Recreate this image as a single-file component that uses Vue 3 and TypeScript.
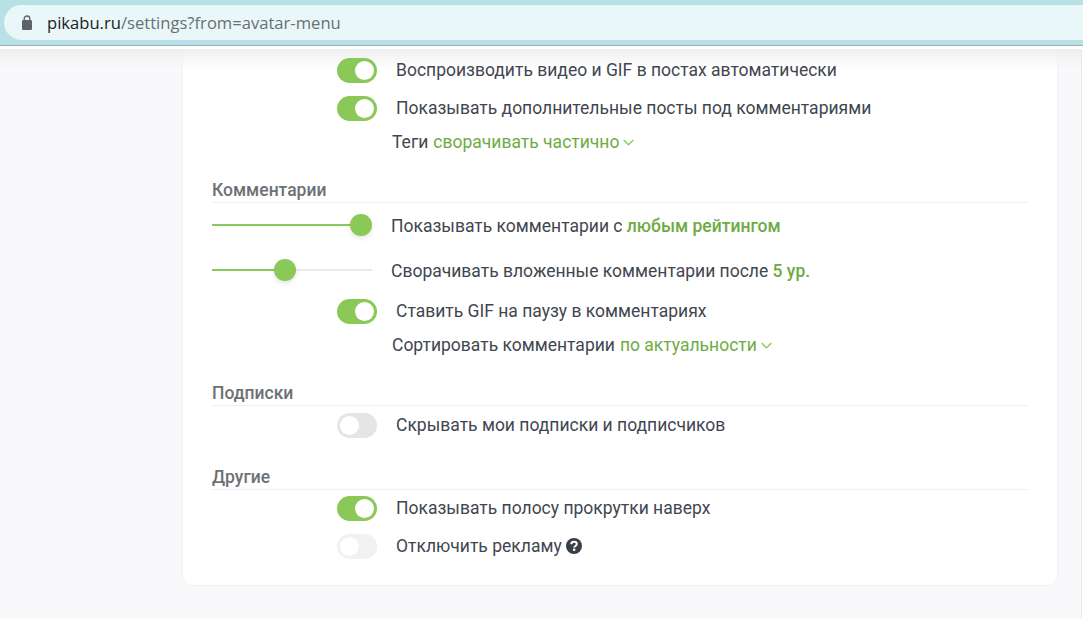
<script setup lang="ts">
interface Row { kind: 'toggle' | 'select' | 'slider'; text: string; on?: boolean; faded?: boolean; value?: string; fill?: number; help?: boolean; bold?: string }
interface Section { title?: string; rows: Row[] }

const sections: Section[] = [
  { rows: [
    { kind: 'toggle', text: 'Воспроизводить видео и GIF в постах автоматически', on: true },
    { kind: 'toggle', text: 'Показывать дополнительные посты под комментариями', on: true },
    { kind: 'select', text: 'Теги', value: 'сворачивать частично' },
  ] },
  { title: 'Комментарии', rows: [
    { kind: 'slider', text: 'Показывать комментарии с ', bold: 'любым рейтингом', fill: 100 },
    { kind: 'slider', text: 'Сворачивать вложенные комментарии после ', bold: '5 ур.', fill: 45 },
    { kind: 'toggle', text: 'Ставить GIF на паузу в комментариях', on: true },
    { kind: 'select', text: 'Сортировать комментарии', value: 'по актуальности' },
  ] },
  { title: 'Подписки', rows: [
    { kind: 'toggle', text: 'Скрывать мои подписки и подписчиков', on: false },
  ] },
  { title: 'Другие', rows: [
    { kind: 'toggle', text: 'Показывать полосу прокрутки наверх', on: true },
    { kind: 'toggle', text: 'Отключить рекламу', on: false, faded: true, help: true },
  ] },
]

// The thumb stays inside the 160px track, so its centre travels over 138px.
function thumbLeft(fill = 0): string {
  return 11 + fill * 1.38 + 'px'
}
</script>

<template>
  <div class="window">
    <header class="browser-bar">
      <div class="omnibox">
        <svg class="lock" width="12" height="15" viewBox="0 0 12 15">
          <rect x="1" y="5" width="10" height="10" rx="1.2" fill="#5f6368" />
          <path d="M3.2 5.5V3.8a2.8 2.8 0 0 1 5.6 0v1.7" fill="none" stroke="#5f6368" stroke-width="1.3" />
        </svg>
        <span class="url"><span class="host">pikabu.ru</span>/settings?from=avatar-menu</span>
      </div>
    </header>
    <div class="gap"></div>
    <main class="page">
      <div class="top-shade"></div>
      <section class="card">
        <div v-for="(section, i) in sections" :key="i" class="section">
          <h3 v-if="section.title" class="heading">{{ section.title }}</h3>
          <template v-for="row in section.rows" :key="row.text">
            <div v-if="row.kind === 'toggle'" class="row toggle-row">
              <span class="toggle" :class="{ on: row.on, faded: row.faded }"><span class="knob"></span></span>
              <span class="label">{{ row.text }}</span>
              <svg v-if="row.help" class="help" width="16" height="16" viewBox="0 0 16 16">
                <circle cx="8" cy="8" r="8" fill="#3a3f47" />
                <path d="M5.2 6.3c.1-1.6 1.2-2.5 2.8-2.5 1.6 0 2.8.9 2.8 2.2 0 2-2.6 1.9-2.6 3.6" fill="none" stroke="#fff" stroke-width="2" />
                <rect x="7" y="10.6" width="2.3" height="2.2" fill="#fff" />
              </svg>
            </div>
            <div v-else-if="row.kind === 'select'" class="row select-row">
              <span class="label">{{ row.text }}</span>
              <span class="value">{{ row.value }}</span>
              <svg class="chevron" width="11" height="7" viewBox="0 0 11 7">
                <path d="M.7 1l4.8 4.8L10.3 1" fill="none" stroke="#8ac858" stroke-width="1.3" />
              </svg>
            </div>
            <div v-else class="row slider-row">
              <span class="slider">
                <span class="track-fill" :style="{ width: thumbLeft(row.fill) }"></span>
                <span class="thumb" :style="{ left: thumbLeft(row.fill) }"></span>
              </span>
              <span class="label">{{ row.text }}<b class="strong">{{ row.bold }}</b></span>
            </div>
          </template>
        </div>
      </section>
    </main>
  </div>
</template>

<style>
html, body { margin: 0; background: #fff; }
</style>

<style scoped>
.window {
  width: 1083px;
  height: 619px;
  overflow: hidden;
  display: flex;
  flex-direction: column;
  font-family: Roboto, "Noto Sans", sans-serif;
  font-size: 17.5px;
  color: #3f4650;
}
.browser-bar {
  flex: none;
  background: #b8e1e5;
  border-bottom: 1px solid #8fb4b8;
  padding-top: 5px;
  height: 40px;
  display: flex;
  align-items: flex-start;
}
.omnibox {
  flex: 1;
  height: 35px;
  margin-left: 4px;
  border-radius: 18px 0 0 18px;
  background: #e9f7f8;
  display: flex;
  align-items: center;
  padding-left: 17px;
}
.lock { margin-right: 14px; }
.url {
  font-family: "Open Sans", "Noto Sans", sans-serif;
  font-size: 16.6px;
  color: #6a6f74;
}
.host { color: #202124; }
.gap { flex: none; height: 3px; background: #fff; }
.page {
  flex: 1;
  position: relative;
  display: flex;
  background: #f9f9fb;
  border-right: 1px solid #e9e9eb;
  margin-right: 1px;
  padding-left: 182px;
  padding-right: 23px;
  min-height: 0;
}
.top-shade {
  position: absolute;
  inset: 0 0 auto 0;
  height: 20px;
  background: linear-gradient(#efeff0, rgba(240, 240, 241, 0));
  pointer-events: none;
  z-index: 1;
}
.card {
  flex: 1;
  align-self: flex-start;
  box-sizing: border-box;
  background: #fff;
  border: 1px solid #f3f3f5;
  border-top: 0;
  border-radius: 0 0 10px 10px;
  padding: 2px 29px 20px;
}
.section + .section { margin-top: 20px; }
.section:last-child .heading { margin-bottom: -1px; }
.heading {
  margin: 0;
  height: 25px;
  line-height: 26px;
  font-size: 17.5px;
  font-weight: 500;
  color: #6d7176;
  border-bottom: 1px solid #f1f1f3;
}
.row { display: flex; align-items: center; position: relative; z-index: 2; }
.toggle-row { height: 38px; padding-left: 125px; }
.select-row { height: 30px; padding-left: 180px; gap: 5px; }
.slider-row { height: 42px; margin-top: 2px; }
.slider-row + .slider-row { margin-top: 3px; }
.label { white-space: pre-wrap; }
.toggle {
  flex: none;
  position: relative;
  width: 40px;
  height: 25px;
  border-radius: 13px;
  background: #e4e5e7;
  margin-right: 19px;
}
.toggle.on { background: #8ac858; }
.toggle.faded { background: #f1f1f3; }
.knob {
  position: absolute;
  top: 3px;
  left: 3px;
  width: 19px;
  height: 19px;
  border-radius: 50%;
  background: #fff;
}
.toggle.on .knob { left: 18px; }
.help { margin-left: 4px; }
.value { color: #6eab45; }
.chevron { margin-top: 1px; margin-left: -1px; }
.slider {
  flex: none;
  position: relative;
  width: 160px;
  height: 2px;
  background: #e9e9eb;
  margin-right: 19px;
  margin-bottom: 2px;
}
.track-fill {
  position: absolute;
  left: 0;
  top: 0;
  height: 100%;
  background: #8ac858;
}
.thumb {
  position: absolute;
  top: 1px;
  width: 22px;
  height: 22px;
  border-radius: 50%;
  background: #8ac858;
  transform: translate(-50%, -50%);
  box-shadow: 0 2px 5px rgba(0, 0, 0, 0.12);
}
.strong { font-weight: 500; color: #6eab45; }
</style>
